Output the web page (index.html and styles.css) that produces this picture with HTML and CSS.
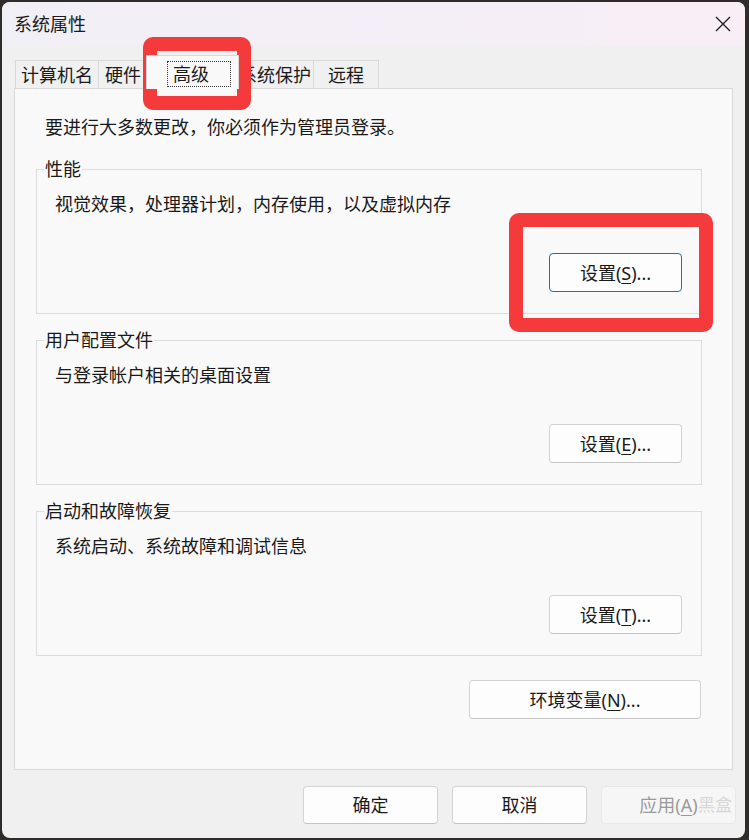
FILE: index.html
```
<!DOCTYPE html>
<html lang="zh-CN">
<head>
<meta charset="utf-8">
<title>系统属性</title>
<link rel="stylesheet" href="styles.css">
</head>
<body>
<div class="window">
  <div class="titlebar">
    <span class="title">系统属性</span>
    <svg class="close" width="16" height="16" viewBox="0 0 16 16"><path d="M1 1 L15 15 M15 1 L1 15" stroke="#1b1b1b" stroke-width="1.3" fill="none"/></svg>
  </div>
  <div class="content">
    <div class="tabs">
      <div class="tab t1">计算机名</div>
      <div class="tab t2">硬件</div>
      <div class="tab sel"><span class="focus">高级</span></div>
      <div class="tab t4">系统保护</div>
      <div class="tab t5">远程</div>
    </div>
    <div class="panel">
      <p class="intro">要进行大多数更改，你必须作为管理员登录。</p>
      <fieldset class="group">
        <legend>性能</legend>
        <p class="desc">视觉效果，处理器计划，内存使用，以及虚拟内存</p>
        <div class="row"><button class="btn set default">设置(<u>S</u>)...</button></div>
      </fieldset>
      <fieldset class="group">
        <legend>用户配置文件</legend>
        <p class="desc">与登录帐户相关的桌面设置</p>
        <div class="row"><button class="btn set">设置(<u>E</u>)...</button></div>
      </fieldset>
      <fieldset class="group">
        <legend>启动和故障恢复</legend>
        <p class="desc">系统启动、系统故障和调试信息</p>
        <div class="row"><button class="btn set">设置(<u>T</u>)...</button></div>
      </fieldset>
      <div class="envrow"><button class="btn env">环境变量(<u>N</u>)...</button></div>
    </div>
    <div class="footer">
      <button class="btn foot">确定</button>
      <button class="btn foot">取消</button>
      <button class="btn foot disabled">应用(<u>A</u>)<span class="wm">黑盒</span></button>
    </div>
  </div>
</div>
<div class="mark mark-tab"></div>
<div class="mark mark-btn"></div>
</body>
</html>
```
FILE: styles.css
```
* { box-sizing: border-box; }
html, body { margin: 0; padding: 0; }
body {
  background: #2f2b2b;
  width: 749px;
  height: 840px;
  padding: 2px 0 0 2px;
  font-family: "Noto Sans", "Noto Sans CJK SC", sans-serif;
  font-size: 18px;
  line-height: 24px;
  color: #1a1a1a;
  overflow: hidden;
}
.window {
  width: 743px;
  height: 836px;
  border-radius: 8px;
  background: #f0f0f0;
  overflow: hidden;
  display: flex;
  flex-direction: column;
}
.titlebar {
  height: 43px;
  flex: none;
  display: flex;
  align-items: center;
  justify-content: space-between;
  padding: 0 14px 0 12px;
  background: linear-gradient(90deg, #f1eff6 0%, #f4eef7 55%, #f9eef6 100%);
}
.title { font-size: 18px; }
.close { display: block; }
.content {
  padding: 10px 12px 0 12px;
  display: flex;
  flex-direction: column;
}
.tabs {
  display: flex;
  align-items: flex-end;
  height: 33px;
  padding-left: 1px;
}
.tab {
  height: 28px;
  border: 1px solid #d9d9d9;
  border-bottom: none;
  background: #f0f0f0;
  display: flex;
  align-items: center;
  justify-content: center;
  line-height: 24px;
  margin-left: -1px;
  white-space: nowrap;
}
.t1 { width: 84px; margin-left: 0; }
.t2 { width: 50px; }
.sel {
  width: 93px;
  height: 34px;
  margin: 0 -2px -1px -2px;
  background: #f9f9f9;
  z-index: 1;
  justify-content: flex-start;
  padding: 3px 0 0 20px;
}
.focus {
  border: 1px dotted #333;
  width: 64px;
  height: 26px;
  line-height: 24px;
  padding-left: 5px;
}
.t4 { width: 78px; }
.t5 { width: 66px; }
.panel {
  height: 682px;
  border: 1px solid #d9d9d9;
  background: #f9f9f9;
  padding: 26px 0 0 21px;
}
.intro { margin: 0 0 18px 9px; }
.group {
  width: 666px;
  margin: 0 0 14px 0;
  border: 1px solid #dcdcdc;
  padding: 11px 19px 21px 0;
}
.group legend {
  padding: 0 1px;
  margin-left: 7px;
  line-height: 24px;
}
.desc { margin: 0 0 37px 18px; }
.row { display: flex; justify-content: flex-end; }
.btn {
  font-family: inherit;
  font-size: 18px;
  line-height: 24px;
  color: #1a1a1a;
  background: #fdfdfd;
  border: 1px solid #d3d3d3;
  border-bottom-color: #c4c4c4;
  border-radius: 4px;
  padding: 0;
  margin: 0;
}
.btn u { text-decoration-thickness: 1px; text-underline-offset: 3px; }
.set { width: 133px; height: 39px; }
.default { border: 1px solid #2a6e9e; }
.envrow { display: flex; justify-content: flex-end; width: 665px; margin-top: 24px; }
.env { width: 232px; height: 39px; }
.footer {
  display: flex;
  justify-content: flex-end;
  gap: 14px;
  margin: 16px -3px 0 0;
}
.foot { width: 135px; height: 38px; }
.disabled {
  position: relative;
  background: #f6f6f6;
  border-color: #e8e8e8;
  color: #9a9a9a;
}
.wm {
  position: absolute;
  left: 96px;
  top: 6px;
  color: #d6d6d6;
  font-size: 17px;
}
.mark {
  position: absolute;
  border: 14px solid #f53a3b;
  border-radius: 10px;
}
.mark-tab { left: 143px; top: 37px; width: 108px; height: 73px; }
.mark-btn { left: 509px; top: 213px; width: 204px; height: 119px; }
```
